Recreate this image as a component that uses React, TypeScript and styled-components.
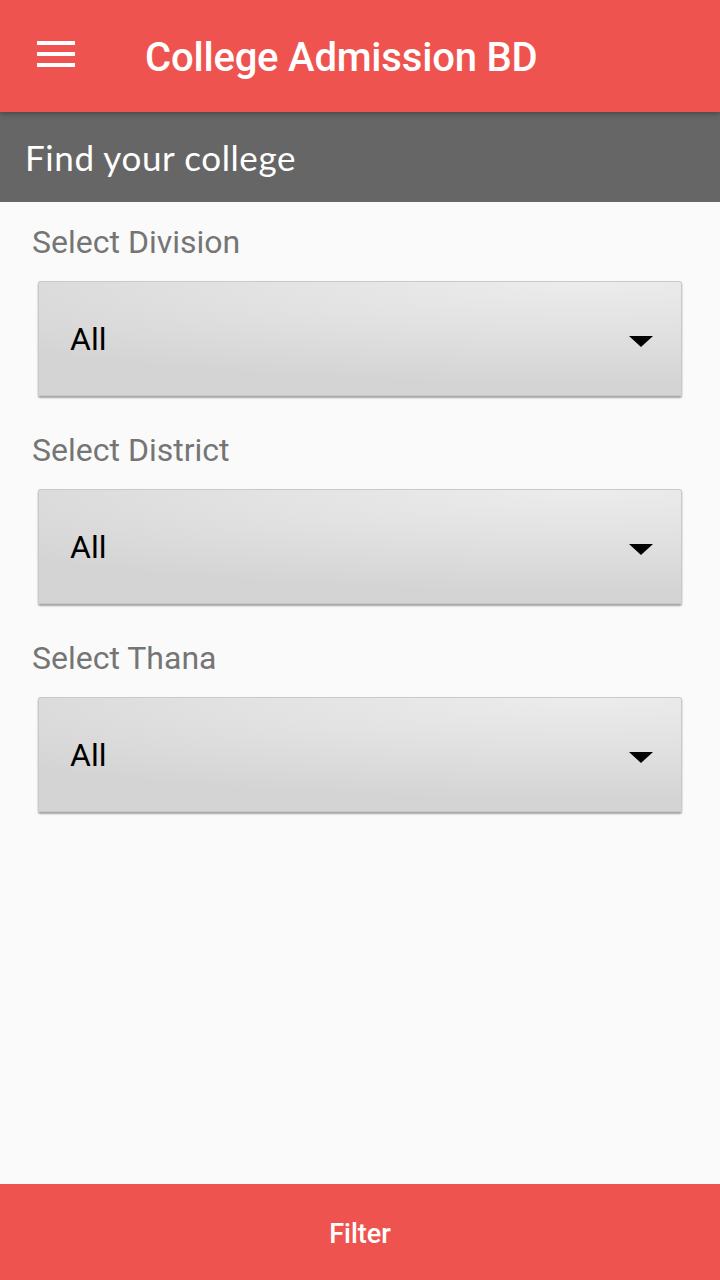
import React from "react";
import styled, { createGlobalStyle } from "styled-components";

const Global = createGlobalStyle`
  html, body { margin: 0; padding: 0; background: #fafafa; }
  #root { min-height: 1280px; }
`;

const Page = styled.div`
  width: 720px;
  height: 1280px;
  display: flex;
  flex-direction: column;
  background: #fafafa;
  font-family: Roboto, "Liberation Sans", sans-serif;
  overflow: hidden;
`;

const AppBar = styled.header`
  height: 112px;
  background: #ef5350;
  display: flex;
  align-items: center;
  padding-left: 37px;
  gap: 70px;
  position: relative;
  z-index: 2;
  box-shadow: 0 2px 5px rgba(0, 0, 0, 0.28);
  flex-shrink: 0;
`;

const Burger = styled.div`
  width: 38px;
  display: flex;
  flex-direction: column;
  gap: 7px;
  margin-top: -4px;
  span {
    display: block;
    height: 4px;
    background: #fff;
  }
`;

const Title = styled.h1`
  margin: 0;
  color: #fff;
  font-size: 40px;
  font-weight: 500;
  letter-spacing: -0.2px;
  margin-top: 2px;
`;

const SubBar = styled.div`
  height: 90px;
  background: #666666;
  display: flex;
  align-items: center;
  padding-left: 25px;
  flex-shrink: 0;
`;

const SubTitle = styled.h2`
  margin: 0;
  color: #fff;
  font-family: Lato, "Open Sans", sans-serif;
  font-weight: 400;
  font-size: 35px;
  letter-spacing: 0.6px;
`;

const Content = styled.main`
  flex: 1;
  display: flex;
  flex-direction: column;
  padding: 20px 38px 0 32px;
`;

const Field = styled.section`
  display: flex;
  flex-direction: column;
  margin-bottom: 34px;
`;

const Label = styled.div`
  color: #757575;
  font-size: 32px;
  line-height: 40px;
  height: 40px;
  margin-bottom: 19px;
`;

const Dropdown = styled.div`
  margin-left: 6px;
  height: 113px;
  border: 1px solid #c9c9c9;
  border-radius: 2px;
  background: radial-gradient(ellipse 120% 90% at 85% 0%, #ececec 0%, #e2e2e2 45%, #d4d4d4 100%);
  box-shadow: 0 2px 2px rgba(0, 0, 0, 0.35);
  display: flex;
  align-items: center;
  justify-content: space-between;
  padding: 0 28px 0 31px;
`;

const Value = styled.span`
  color: #000;
  font-size: 32px;
  font-family: Roboto, "Liberation Sans", sans-serif;
`;

const Caret = styled.span`
  width: 0;
  height: 0;
  margin-top: 6px;
  border-left: 12px solid transparent;
  border-right: 12px solid transparent;
  border-top: 11px solid #000;
`;

const FilterBar = styled.button`
  height: 96px;
  width: 100%;
  border: none;
  background: #ef5350;
  color: #fff;
  font-family: Roboto, "Liberation Sans", sans-serif;
  font-size: 27px;
  font-weight: 500;
  flex-shrink: 0;
  padding: 0;
  padding-top: 3px;
`;

const fields = ["Select Division", "Select District", "Select Thana"];

export default function App() {
  return (
    <Page>
      <Global />
      <AppBar>
        <Burger>
          <span />
          <span />
          <span />
        </Burger>
        <Title>College Admission BD</Title>
      </AppBar>
      <SubBar>
        <SubTitle>Find your college</SubTitle>
      </SubBar>
      <Content>
        {fields.map((f) => (
          <Field key={f}>
            <Label>{f}</Label>
            <Dropdown>
              <Value>All</Value>
              <Caret />
            </Dropdown>
          </Field>
        ))}
      </Content>
      <FilterBar>Filter</FilterBar>
    </Page>
  );
}
